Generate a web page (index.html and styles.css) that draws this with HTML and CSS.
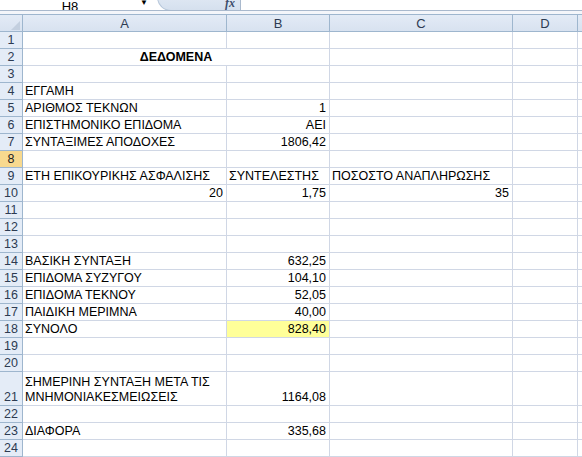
FILE: index.html
```html
<!DOCTYPE html>
<html lang="el">
<head>
    <meta charset="UTF-8">
    <title>ΔΕΔΟΜΕΝΑ</title>
    <link rel="stylesheet" href="styles.css">
</head>
<body>
    <div class="formula-bar">
        <div class="name-box"><span>H8</span></div>
        <span class="drop">&#9660;</span>
        <div class="fx-box"><span class="fx">fx</span></div>
        <div class="formula-input"></div>
    </div>
    <div class="bar-gap"></div>
    <table class="sheet">
        <colgroup>
            <col class="c-head">
            <col class="c-a">
            <col class="c-b">
            <col class="c-c">
            <col class="c-d">
            <col class="c-e">
        </colgroup>
        <thead>
            <tr>
                <th class="corner"><svg width="9" height="9" viewBox="0 0 9 9"><polygon points="9,0 9,9 0,9" fill="#c3cfdf"/></svg></th>
                <th>A</th>
                <th>B</th>
                <th>C</th>
                <th>D</th>
                <th></th>
            </tr>
        </thead>
        <tbody>
            <tr><th>1</th><td></td><td></td><td></td><td></td><td></td></tr>
            <tr><th>2</th><td colspan="2" class="title">ΔΕΔΟΜΕΝΑ</td><td></td><td></td><td></td></tr>
            <tr><th>3</th><td></td><td></td><td></td><td></td><td></td></tr>
            <tr><th>4</th><td>ΕΓΓΑΜΗ</td><td></td><td></td><td></td><td></td></tr>
            <tr><th>5</th><td>ΑΡΙΘΜΟΣ ΤΕΚΝΩΝ</td><td class="num">1</td><td></td><td></td><td></td></tr>
            <tr><th>6</th><td>ΕΠΙΣΤΗΜΟΝΙΚΟ ΕΠΙΔΟΜΑ</td><td class="num">ΑΕΙ</td><td></td><td></td><td></td></tr>
            <tr><th>7</th><td>ΣΥΝΤΑΞΙΜΕΣ ΑΠΟΔΟΧΕΣ</td><td class="num">1806,42</td><td></td><td></td><td></td></tr>
            <tr><th class="active">8</th><td></td><td></td><td></td><td></td><td></td></tr>
            <tr><th>9</th><td>ΕΤΗ ΕΠΙΚΟΥΡΙΚΗΣ ΑΣΦΑΛΙΣΗΣ</td><td>ΣΥΝΤΕΛΕΣΤΗΣ</td><td>ΠΟΣΟΣΤΟ ΑΝΑΠΛΗΡΩΣΗΣ</td><td></td><td></td></tr>
            <tr><th>10</th><td class="num">20</td><td class="num">1,75</td><td class="num">35</td><td></td><td></td></tr>
            <tr><th>11</th><td></td><td></td><td></td><td></td><td></td></tr>
            <tr><th>12</th><td></td><td></td><td></td><td></td><td></td></tr>
            <tr><th>13</th><td></td><td></td><td></td><td></td><td></td></tr>
            <tr><th>14</th><td>ΒΑΣΙΚΗ ΣΥΝΤΑΞΗ</td><td class="num">632,25</td><td></td><td></td><td></td></tr>
            <tr><th>15</th><td>ΕΠΙΔΟΜΑ ΣΥΖΥΓΟΥ</td><td class="num">104,10</td><td></td><td></td><td></td></tr>
            <tr><th>16</th><td>ΕΠΙΔΟΜΑ ΤΕΚΝΟΥ</td><td class="num">52,05</td><td></td><td></td><td></td></tr>
            <tr><th>17</th><td>ΠΑΙΔΙΚΗ ΜΕΡΙΜΝΑ</td><td class="num">40,00</td><td></td><td></td><td></td></tr>
            <tr><th>18</th><td>ΣΥΝΟΛΟ</td><td class="num total">828,40</td><td></td><td></td><td></td></tr>
            <tr><th>19</th><td></td><td></td><td></td><td></td><td></td></tr>
            <tr><th>20</th><td></td><td></td><td></td><td></td><td></td></tr>
            <tr class="tall"><th>21</th><td>ΣΗΜΕΡΙΝΗ ΣΥΝΤΑΞΗ ΜΕΤΑ ΤΙΣ<br>ΜΝΗΜΟΝΙΑΚΕΣΜΕΙΩΣΕΙΣ</td><td class="num">1164,08</td><td></td><td></td><td></td></tr>
            <tr><th>22</th><td></td><td></td><td></td><td></td><td></td></tr>
            <tr><th>23</th><td>ΔΙΑΦΟΡΑ</td><td class="num">335,68</td><td></td><td></td><td></td></tr>
            <tr><th>24</th><td></td><td></td><td></td><td></td><td></td></tr>
        </tbody>
    </table>
</body>
</html>
```
FILE: styles.css
```css
body {
    margin: 0;
    background: #fff;
    font-family: "Liberation Sans", Arial, sans-serif;
    overflow: hidden;
    width: 582px;
    height: 457px;
}

/* formula bar, only its lower edge is in view */
.formula-bar {
    display: flex;
    height: 10px;
    overflow: hidden;
    border-bottom: 1px solid #a9b9cd;
    background: #fff;
}
.name-box {
    width: 140px;
    text-align: center;
    font-size: 13px;
    line-height: 13px;
}
.name-box span {
    display: inline-block;
    margin-top: -4px;
}
.drop {
    width: 17px;
    font-size: 8px;
    line-height: 8px;
    margin-top: -1px;
    color: #000;
}
.fx-box {
    width: 82px;
    height: 22px;
    margin-top: -12px;
    border-radius: 0 0 0 14px;
    background: linear-gradient(#e6edf7, #d5e0ee);
    border-left: 1px solid #b6c6da;
    border-bottom: 1px solid #b6c6da;
    border-right: 1px solid #a9b9cd;
    text-align: right;
}
.fx {
    display: inline-block;
    font-family: "Liberation Serif", serif;
    font-style: italic;
    font-weight: bold;
    font-size: 12px;
    color: #3c4d6b;
    margin: 8px 5px 0 0;
}
.formula-input {
    flex: 1;
}
.bar-gap {
    height: 3px;
    background: #f4f6fa;
}

/* grid */
.sheet {
    border-collapse: separate;
    border-spacing: 0;
    table-layout: fixed;
    width: 600px;
    font-size: 12.5px;
    color: #000;
}
.c-head { width: 23px; }
.c-a { width: 204px; }
.c-b { width: 103px; }
.c-c { width: 183px; }
.c-d { width: 65px; }
.c-e { width: 22px; }

.sheet td,
.sheet th {
    box-sizing: border-box;
    height: 17px;
    padding: 0 2px;
    line-height: 15px;
    white-space: nowrap;
    overflow: visible;
    vertical-align: bottom;
    border-right: 1px solid #d0d7e5;
    border-bottom: 1px solid #d0d7e5;
}
.sheet thead th {
    height: 18px;
    border-top: 1px solid #9eb6ce;
    border-right: 1px solid #9eb6ce;
    border-bottom: 1px solid #9eb6ce;
    background: linear-gradient(#e3ebf6, #d8e2f0);
    font-weight: normal;
    font-size: 13px;
    color: #2d3b52;
    text-align: center;
    vertical-align: middle;
}
.sheet thead th.corner {
    padding: 0 2px 1px 0;
    text-align: right;
    vertical-align: bottom;
    line-height: 9px;
}
.sheet tbody th {
    padding: 0;
    background: #e4ecf7;
    border-right: 1px solid #9eb6ce;
    border-bottom: 1px solid #9eb6ce;
    font-weight: normal;
    font-size: 12.5px;
    color: #2d3b52;
    text-align: center;
}
.sheet tbody th.active {
    background: #f8d98e;
    color: #222;
}
.sheet .title {
    text-align: center;
    font-weight: bold;
}
.sheet .num {
    text-align: right;
    padding-right: 3px;
}
.sheet .total {
    background: #ffff99;
}
.sheet .tall td,
.sheet .tall th {
    height: 34px;
}
```
